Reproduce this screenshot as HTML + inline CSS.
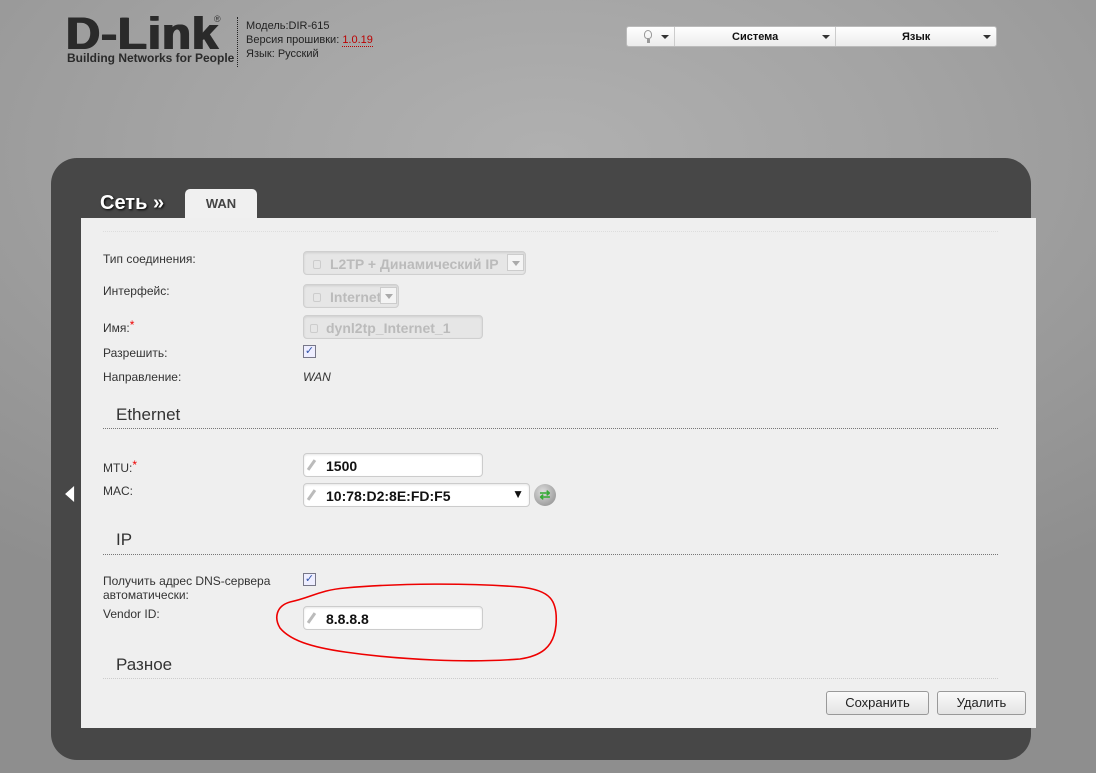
<!DOCTYPE html>
<html><head><meta charset="utf-8"><style>
*{margin:0;padding:0;box-sizing:border-box}
body{width:1096px;height:773px;overflow:hidden;position:relative;font-family:"Liberation Sans",Arial,sans-serif;
background:radial-gradient(ellipse 900px 500px at 50% 20%,#b0b0b0 0%,#a4a4a4 40%,#8e8e8e 100%);}
.a{position:absolute}
.lbl{position:absolute;left:103px;font-size:12px;color:#333}
.inp{position:absolute;height:24px;border:1px solid #ccc;border-radius:4px;background:#fff;font-size:14px;font-weight:bold;color:#111;padding:4px 0 0 22px;box-shadow:inset 0 1px 2px rgba(0,0,0,.1)}
.inp.dis{background:#e6e6e6;color:#bbb;border-color:#cfcfcf;padding-left:26px}
.pen{position:absolute;left:6px;top:5px;width:3px;height:12px;background:#bbb;transform:rotate(35deg)}
.lock{position:absolute;left:9px;top:8px;width:8px;height:9px;border:1px solid #ccc;border-radius:2px}
.dd{position:absolute;right:1px;top:2px;width:17px;height:17px;border:1px solid #ccc;background:#f4f4f4}
.dd:after{content:"";position:absolute;left:4px;top:6px;border:4px solid transparent;border-top:5px solid #aaa}
.sec{position:absolute;left:116px;font-size:17px;color:#333}
.line{position:absolute;left:103px;width:895px;border-top:1px dotted #777}
.cb{position:absolute;left:303px;width:13px;height:13px;border:1px solid #778;background:#eef;font-size:11px;line-height:11px;text-align:center;color:#35a}
.btn{position:absolute;top:691px;height:24px;border:1px solid #999;border-radius:3px;background:linear-gradient(#fafafa,#e4e4e4);font-size:13px;color:#222;text-align:center;line-height:22px}
</style></head><body>
<div class="a" style="left:66px;top:14px;font:900 45px/40px 'Liberation Sans',sans-serif;color:#2a2a2a;letter-spacing:1px;transform:scaleX(1.05);transform-origin:left;text-shadow:1px 0 0 #2a2a2a,-1px 0 0 #2a2a2a">D-Link</div>
<div class="a" style="left:214px;top:14px;font-size:9px;color:#333">®</div>
<div class="a" style="left:67px;top:51px;font:bold 12px 'Liberation Sans',sans-serif;color:#2a2a2a">Building Networks for People</div>
<div class="a" style="left:237px;top:17px;height:50px;border-left:1px dotted #222"></div>
<div class="a" style="left:246px;top:19px;font-size:11px;line-height:14px;color:#222">Модель:DIR-615<br>Версия прошивки: <span style="color:#b00;border-bottom:1px dotted #b00">1.0.19</span><br>Язык: Русский</div>
<div class="a" style="left:626px;top:26px;width:371px;height:21px;background:linear-gradient(#fff,#ececec);border:1px solid #bbb;border-radius:3px;font:bold 11px/19px 'Liberation Sans',sans-serif;color:#111">
<div class="a" style="left:17px;top:3px;width:8px;height:9px;border:1px solid #999;border-radius:50% 50% 40% 40%"></div>
<div class="a" style="left:20px;top:12px;width:3px;height:4px;background:#999"></div>
<div class="a" style="left:34px;top:8px;border:4px solid transparent;border-top:4px solid #333"></div>
<div class="a" style="left:47px;top:0;height:19px;border-left:1px solid #ccc"></div>
<div class="a" style="left:105px;top:1px">Система</div>
<div class="a" style="left:195px;top:8px;border:4px solid transparent;border-top:4px solid #333"></div>
<div class="a" style="left:208px;top:0;height:19px;border-left:1px solid #ccc"></div>
<div class="a" style="left:275px;top:1px">Язык</div>
<div class="a" style="left:356px;top:8px;border:4px solid transparent;border-top:4px solid #333"></div>
</div>
<div class="a" style="left:51px;top:158px;width:980px;height:602px;background:#474747;border-radius:26px"></div>
<div class="a" style="left:100px;top:192px;font:bold 20px 'Liberation Sans',sans-serif;color:#fff;text-shadow:1px 1px 2px #000">Сеть »</div>
<div class="a" style="left:185px;top:189px;width:72px;height:31px;background:#f0f0f0;border-radius:5px 5px 0 0;font:bold 13px/30px 'Liberation Sans',sans-serif;color:#444;text-align:center">WAN</div>
<div class="a" style="left:57px;top:486px;border:8px solid transparent;border-right:10px solid #fff;width:0;height:0;transform:scaleX(.9)"></div>
<div class="a" style="left:81px;top:218px;width:955px;height:510px;background:#efefef"></div>
<div class="line" style="top:231px;border-top:1px dotted #ddd"></div>
<div class="lbl" style="top:252px">Тип соединения:</div>
<div class="inp dis" style="left:303px;top:251px;width:223px">L2TP + Динамический IP<span class="lock"></span><span class="dd"></span></div>
<div class="lbl" style="top:284px">Интерфейс:</div>
<div class="inp dis" style="left:303px;top:284px;width:96px">Internet<span class="lock"></span><span class="dd"></span></div>
<div class="lbl" style="top:318px">Имя:<span style="color:#e00;vertical-align:3px">*</span></div>
<div class="inp dis" style="left:303px;top:315px;width:180px;padding-left:22px">dynl2tp_Internet_1<span class="lock" style="left:6px"></span></div>
<div class="lbl" style="top:346px">Разрешить:</div>
<div class="cb" style="top:345px">✓</div>
<div class="lbl" style="top:370px">Направление:</div>
<div class="a" style="left:303px;top:370px;font-size:12px;font-style:italic;color:#333">WAN</div>
<div class="sec" style="top:405px">Ethernet</div>
<div class="line" style="top:428px"></div>
<div class="lbl" style="top:458px">MTU:<span style="color:#e00;vertical-align:3px">*</span></div>
<div class="inp" style="left:303px;top:453px;width:180px">1500<span class="pen"></span></div>
<div class="lbl" style="top:484px">MAC:</div>
<div class="inp" style="left:303px;top:483px;width:227px">10:78:D2:8E:FD:F5<span class="pen"></span><span class="a" style="right:5px;top:3px;font-size:12px">▼</span></div>
<div class="a" style="left:534px;top:484px;width:22px;height:22px;border-radius:50%;background:radial-gradient(circle at 40% 35%,#ddd,#888);color:#3a3;font:bold 13px/22px sans-serif;text-align:center">⇄</div>
<div class="sec" style="top:530px">IP</div>
<div class="line" style="top:554px"></div>
<div class="lbl" style="top:574px;line-height:14px">Получить адрес DNS-сервера<br>автоматически:</div>
<div class="cb" style="top:573px">✓</div>
<div class="lbl" style="top:607px">Vendor ID:</div>
<div class="inp" style="left:303px;top:606px;width:180px">8.8.8.8<span class="pen"></span></div>
<svg class="a" style="left:0;top:0" width="1096" height="773"><path d="M290 602 C310 598 320 590 345 588 C400 583 470 583 520 587 C550 590 558 600 556 625 C554 648 540 656 520 659 C470 663 400 660 345 652 C310 647 290 640 280 628 C274 618 276 606 290 602" fill="none" stroke="#e00" stroke-width="1.6"/></svg>
<div class="sec" style="top:655px">Разное</div>
<div class="line" style="top:678px;border-top:1px dotted #ccc"></div>
<div class="btn" style="left:826px;width:103px">Сохранить</div>
<div class="btn" style="left:937px;width:89px">Удалить</div>
</body></html>
